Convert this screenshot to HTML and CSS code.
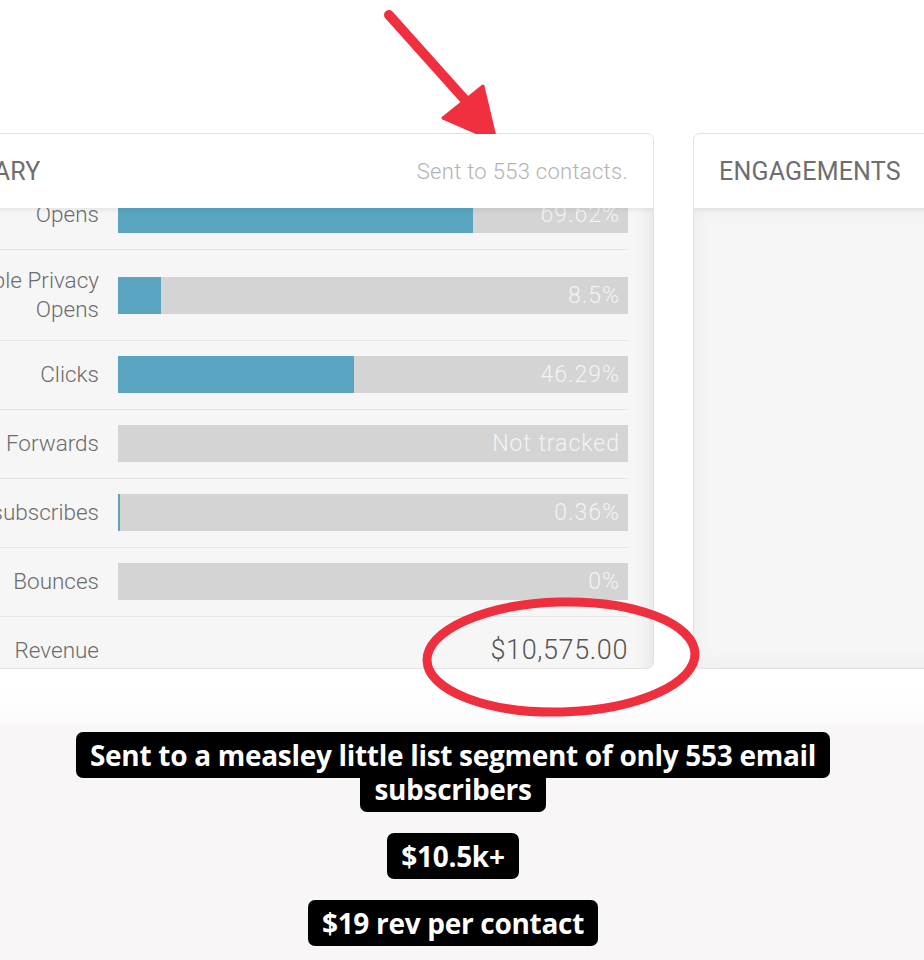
FILE: index.html
```html
<!DOCTYPE html>
<html lang="en">
<head>
<meta charset="utf-8">
<title>Campaign summary</title>
<link rel="stylesheet" href="styles.css">
</head>
<body>
<div class="screen">
  <div class="shot">
    <div class="cards">
      <section class="card summary">
        <header class="card-head">
          <h2 class="card-title">SUMMARY</h2>
          <span class="sent">Sent to 553 contacts.</span>
        </header>
        <div class="card-body">
          <div class="rows">
            <div class="row">
              <div class="label">Opens</div>
              <div class="bar"><div class="fill" style="width:69.62%"></div><span class="pct">69.62%</span></div>
            </div>
            <div class="row two-line">
              <div class="label">Apple Privacy<br>Opens</div>
              <div class="bar"><div class="fill" style="width:8.5%"></div><span class="pct">8.5%</span></div>
            </div>
            <div class="row">
              <div class="label">Clicks</div>
              <div class="bar"><div class="fill" style="width:46.29%"></div><span class="pct">46.29%</span></div>
            </div>
            <div class="row">
              <div class="label">Forwards</div>
              <div class="bar"><span class="pct">Not tracked</span></div>
            </div>
            <div class="row">
              <div class="label">Unsubscribes</div>
              <div class="bar"><div class="fill" style="width:0.36%"></div><span class="pct">0.36%</span></div>
            </div>
            <div class="row">
              <div class="label">Bounces</div>
              <div class="bar"><span class="pct">0%</span></div>
            </div>
            <div class="row revenue">
              <div class="label">Revenue</div>
              <div class="value">$10,575.00</div>
            </div>
          </div>
        </div>
      </section>
      <section class="card engagements">
        <header class="card-head">
          <h2 class="card-title">ENGAGEMENTS</h2>
        </header>
        <div class="card-body eng-body"></div>
      </section>
    </div>
    <svg class="arrow" width="140" height="160" viewBox="370 0 140 160" aria-hidden="true">
      <line x1="389" y1="15" x2="466" y2="101" stroke="#f0303e" stroke-width="10" stroke-linecap="round"/>
      <polygon points="443,118 483,86 496,141" fill="#f0303e" stroke="#f0303e" stroke-width="3" stroke-linejoin="round"/>
    </svg>
    <svg class="ring" width="300" height="140" viewBox="410 590 300 140" aria-hidden="true">
      <ellipse cx="561" cy="657" rx="134" ry="55" fill="none" stroke="#ef2f3d" stroke-width="9" transform="rotate(-1.5 561 657)"/>
    </svg>
  </div>
  <div class="captions">
    <p class="cap-line"><span class="cap cap-first">Sent to a measley little list segment of only 553 email</span> <span class="cap cap-next">subscribers</span></p>
    <p class="cap-line"><span class="cap">$10.5k+</span></p>
    <p class="cap-line"><span class="cap">$19 rev per contact</span></p>
  </div>
</div>
</body>
</html>
```
FILE: styles.css
```css
* { box-sizing: border-box; }
html, body { margin: 0; padding: 0; }
body {
  width: 924px;
  height: 960px;
  overflow: hidden;
  background: #f8f6f6;
  font-family: Roboto, "Liberation Sans", sans-serif;
}
.screen { width: 924px; }
.shot {
  position: relative;
  height: 724px;
  background: linear-gradient(#ffffff 0, #ffffff 690px, #fbfafa 724px);
  padding-top: 133px;
}
.cards {
  display: flex;
  gap: 39px;
  margin-left: -110px;
}
.card {
  border: 1px solid #e2e2e2;
  border-radius: 7px;
  overflow: hidden;
  background: #f6f6f6;
  display: flex;
  flex-direction: column;
  height: 536px;
}
.summary { width: 764px; flex: none; }
.engagements { width: 320px; flex: none; }
.card-head {
  position: relative;
  z-index: 2;
  height: 74px;
  flex: none;
  background: #ffffff;
  display: flex;
  align-items: center;
  justify-content: space-between;
  padding: 0 25px 0 27px;
  box-shadow: 0 2px 5px rgba(0,0,0,0.07);
}
.engagements .card-head { padding-left: 25px; }
.card-title {
  margin: 0;
  font-weight: 400;
  font-size: 25px;
  color: #6e6e6e;
  letter-spacing: 0.2px;
}
.sent {
  font-size: 22px;
  font-weight: 300;
  color: #b3b3b3;
  letter-spacing: 0.3px;
}
.card-body {
  flex: 1;
  overflow: hidden;
  position: relative;
  box-shadow: inset -14px 0 16px -10px rgba(0,0,0,0.07);
}
.rows { margin-top: -27px; padding: 0 25px 0 20px; }
.row {
  display: flex;
  align-items: center;
  gap: 19px;
  padding: 15px 0 16px;
  border-bottom: 1px solid #e5e5e5;
}
.row.two-line { padding: 16px 0 16px; }
.label {
  width: 188px;
  flex: none;
  text-align: right;
  font-size: 22.5px;
  font-weight: 300;
  line-height: 29px;
  color: #6c6c6c;
}
.bar {
  position: relative;
  flex: 1;
  height: 37px;
  background: #d4d4d4;
  display: flex;
  align-items: center;
  justify-content: flex-end;
}
.fill {
  position: absolute;
  left: 0;
  top: 0;
  bottom: 0;
  background: #59a4c1;
  min-width: 2px;
}
.pct {
  position: relative;
  padding-right: 8px;
  font-size: 23px;
  font-weight: 300;
  color: #f3f3f3;
  letter-spacing: 1px;
}
.revenue {
  border-bottom: none;
  height: 51px;
  padding: 15px 0 0;
  justify-content: space-between;
}
.value {
  font-size: 27px;
  font-weight: 300;
  color: #555555;
  letter-spacing: 0.6px;
}
.eng-body {
  background: #f6f6f6;
  box-shadow: inset 0 0 22px rgba(0,0,0,0.05);
}
.arrow {
  position: absolute;
  left: 370px;
  top: 0;
}
.ring {
  position: absolute;
  left: 410px;
  top: 590px;
}
.captions {
  padding: 8px 18px 0 0;
  display: flex;
  flex-direction: column;
  align-items: center;
  gap: 21px;
}
.cap-line {
  margin: 0;
  display: flex;
  flex-direction: column;
  align-items: center;
  font-family: "Open Sans", Roboto, sans-serif;
  font-weight: 700;
  font-size: 28px;
  line-height: 34px;
}
.cap {
  display: block;
  background: #000000;
  color: #ffffff;
  letter-spacing: -0.3px;
  padding: 6px 14px;
  border-radius: 7px;
  white-space: nowrap;
}
.cap-first {
  position: relative;
  z-index: 1;
}
.cap-next {
  margin-top: -12px;
}
```
